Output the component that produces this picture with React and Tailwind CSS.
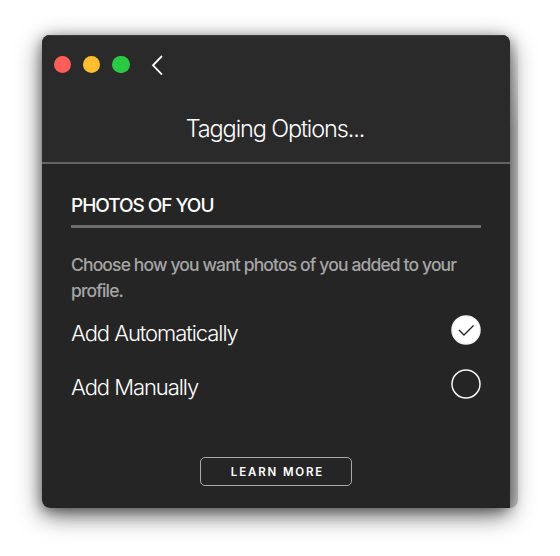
function TitleBar() {
  return (
    <header className="h-[129px] border-t border-b-2 border-t-[#3c3e3d] border-b-[#646464] bg-[#2a2a2a]">
      <div className="flex h-[57px] items-center pl-[11.5px]">
        <div className="flex gap-[11.5px]">
          <span className="size-[17.7px] rounded-full bg-[#ff5f58]" />
          <span className="size-[17.7px] rounded-full bg-[#ffbe2f]" />
          <span className="size-[17.7px] rounded-full bg-[#2acb42]" />
        </div>
        <svg className="ml-[21.5px] h-5 w-3" viewBox="0 0 12 20" fill="none" stroke="#fff" strokeWidth="1.8">
          <path d="M11 1 L2 10.3 L11 19.6" />
        </svg>
      </div>
      <h1 className="h-[69px] pr-[2px] text-center text-[23.5px] leading-[71px] font-light tracking-[-1.12px] text-white">
        Tagging Options...
      </h1>
    </header>
  );
}

function Option({ label, selected }) {
  return (
    <div className="flex h-[54px] items-start justify-between">
      <span className="pt-[3px] text-[22px] leading-[30px] font-light tracking-[-1.06px] text-white">{label}</span>
      <svg className="size-[30px]" viewBox="0 0 30 30" fill="none">
        <circle cx="15" cy="15" r="14" fill={selected ? "#fff" : "none"} stroke="#f4f4f4" strokeWidth="1.5" />
        {selected && <path d="M8 15 L13 20 L22.5 10.5" stroke="#252525" strokeWidth="1.4" />}
      </svg>
    </div>
  );
}

export default function App() {
  return (
    <div className="h-[556px] w-[560px] overflow-hidden bg-white pt-[35px] pl-[42px] font-[Inter,'Liberation_Sans',sans-serif]">
      <div className="relative h-[473px] w-[468px] rounded-lg shadow-[0_7px_24px_rgba(0,0,0,0.6),0_3px_12px_rgba(0,0,0,0.35)]">
        <div className="absolute inset-y-0 -right-2 w-5 rounded-r-lg bg-linear-to-b from-transparent to-black/20 to-20%" />
        <div className="relative flex h-full flex-col overflow-hidden rounded-tl-lg rounded-tr-lg rounded-bl-lg bg-[#252525]">
          <TitleBar />
          <main className="flex flex-1 flex-col px-[29px]">
            <h2 className="mt-[26px] h-[38px] border-b-3 border-[#6d6d6d] text-[19px] leading-[31px] font-medium tracking-[-1.05px] text-white">
              PHOTOS OF YOU
            </h2>
            <p className="mt-[24px] h-[52px] text-[17.5px] leading-[26px] font-medium tracking-[-0.86px] text-[#a5a5a5]">
              Choose how you want photos of you added to your profile.
            </p>
            <div className="mt-[11px]">
              <Option label="Add Automatically" selected />
              <Option label="Add Manually" />
            </div>
            <button className="mt-[34px] ml-[129px] h-[29px] w-[152px] rounded-[5px] border border-[#aaa] pt-[2px] pl-[3px] text-[11.5px] font-semibold tracking-[1.85px] text-white">
              LEARN MORE
            </button>
          </main>
        </div>
      </div>
    </div>
  );
}
